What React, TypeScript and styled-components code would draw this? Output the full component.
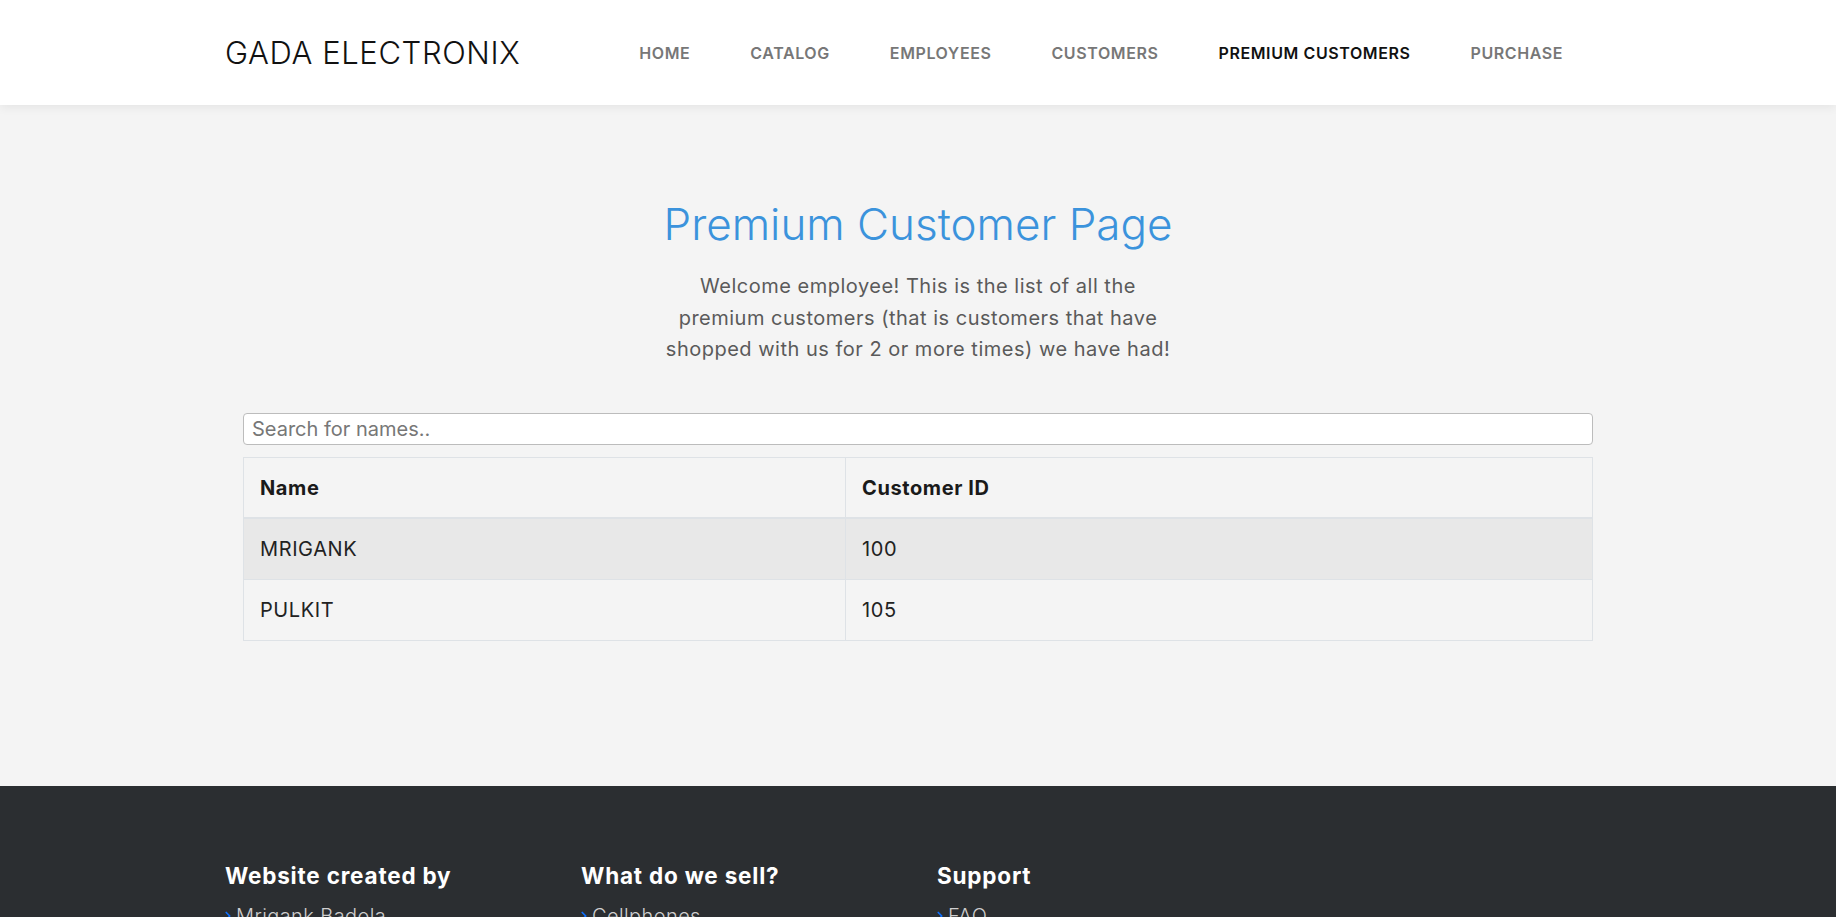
// @ts-nocheck
import React, { useState } from 'react';
import styled, { createGlobalStyle } from 'styled-components';
import { ChevronRight } from 'lucide-react';

const GlobalStyle = createGlobalStyle`
  html, body {
    margin: 0;
    padding: 0;
    background-color: #f4f4f4;
    font-family: Inter, "Open Sans", "Liberation Sans", sans-serif;
  }
  * {
    box-sizing: border-box;
  }
`;

const Page = styled.div`
  display: flex;
  flex-direction: column;
  min-height: 100vh;
`;

const Header = styled.header`
  height: 105px;
  background-color: #fff;
  box-shadow: 0 2px 10px rgba(0, 0, 0, 0.07);
  display: flex;
  align-items: center;
  padding: 0 225px;
  position: relative;
  z-index: 1;
`;

const Logo = styled.div`
  font-size: 31px;
  font-weight: 300;
  color: #111;
  letter-spacing: 0.6px;
`;

const Nav = styled.nav`
  display: flex;
  gap: 60px;
  margin-left: 119px;
`;

const NavLink = styled.a<{ active?: boolean }>`
  font-size: 16px;
  font-weight: 600;
  letter-spacing: 0.6px;
  text-transform: uppercase;
  color: ${props => props.active ? '#111' : '#777'};
  text-decoration: none;
  cursor: pointer;
`;

const Main = styled.main`
  display: flex;
  flex-direction: column;
  align-items: center;
  padding: 92px 0 145px;
`;

const Title = styled.h1`
  margin: 0;
  font-size: 44px;
  font-weight: 300;
  color: #3b93dc;
  line-height: 54px;
`;

const Intro = styled.p`
  margin: 20px 0 0;
  font-size: 20px;
  font-weight: 400;
  letter-spacing: 0.5px;
  line-height: 31.6px;
  color: #5a5a5a;
  text-align: center;
`;

const SearchInput = styled.input`
  width: 1350px;
  height: 32px;
  margin-top: 47px;
  padding: 0 8px;
  border: 1px solid #bcbcbc;
  border-radius: 4px;
  background: #fff;
  font-size: 20px;
  font-family: inherit;
  color: #333;

  &::placeholder {
    color: #777;
  }

  &:focus {
    outline: none;
    border-color: #3b93dc;
  }
`;

const Table = styled.table`
  width: 1350px;
  margin-top: 12px;
  border-collapse: collapse;
  border: 1px solid #dee2e6;
`;

const HeadCell = styled.th<{ width?: string }>`
  width: ${props => props.width || 'auto'};
  height: 61px;
  padding: 0 16px;
  text-align: left;
  font-size: 20px;
  font-weight: 700;
  letter-spacing: 0.6px;
  color: #1a1a1a;
  border: 1px solid #dee2e6;
  border-bottom: 2px solid #dee2e6;
`;

const Row = styled.tr<{ shaded?: boolean }>`
  background-color: ${props => props.shaded ? '#e8e8e8' : '#f4f4f4'};
`;

const Cell = styled.td`
  height: 61px;
  padding: 0 16px;
  font-size: 20px;
  font-weight: 400;
  letter-spacing: 0.6px;
  color: #222;
  border: 1px solid #dee2e6;
`;

const Footer = styled.footer`
  background-color: #2b2e31;
  padding: 76px 225px 60px;
  display: grid;
  grid-template-columns: repeat(4, 356px);
`;

const FooterColumn = styled.div`
  display: flex;
  flex-direction: column;
`;

const FooterHeading = styled.h4`
  margin: 0 0 14px;
  font-size: 22.5px;
  font-weight: 700;
  letter-spacing: 0.8px;
  color: #fff;
  line-height: 28px;
`;

const FooterList = styled.ul`
  list-style: none;
  margin: 0;
  padding: 0;
  display: flex;
  flex-direction: column;
  gap: 10px;
`;

const FooterItem = styled.li`
  display: flex;
  align-items: center;
  gap: 1px;
  margin-left: -4px;
  font-size: 20px;
  font-weight: 300;
  letter-spacing: 0.4px;
  color: #cfcfcf;
`;

const navItems = ['Home', 'Catalog', 'Employees', 'Customers', 'Premium Customers', 'Purchase'];

const customers = [
  { name: 'MRIGANK', id: 100 },
  { name: 'PULKIT', id: 105 },
];

const footerColumns = [
  { heading: 'Website created by', links: ['Mrigank Badola', 'Pulkit'] },
  { heading: 'What do we sell?', links: ['Cellphones', 'Laptops', 'Accessories'] },
  { heading: 'Support', links: ['FAQ', 'Contact us'] },
];

export default function App() {
  const [query, setQuery] = useState('');

  const rows = customers.filter(c => c.name.toLowerCase().includes(query.toLowerCase()));

  return (
    <Page>
      <GlobalStyle />
      <Header>
        <Logo>GADA ELECTRONIX</Logo>
        <Nav>
          {navItems.map(item => (
            <NavLink key={item} active={item === 'Premium Customers'}>{item}</NavLink>
          ))}
        </Nav>
      </Header>

      <Main>
        <Title>Premium Customer Page</Title>
        <Intro>
          Welcome employee! This is the list of all the<br />
          premium customers (that is customers that have<br />
          shopped with us for 2 or more times) we have had!
        </Intro>

        <SearchInput
          value={query}
          onChange={e => setQuery(e.target.value)}
          placeholder="Search for names.."
        />

        <Table>
          <thead>
            <tr>
              <HeadCell width="602px">Name</HeadCell>
              <HeadCell>Customer ID</HeadCell>
            </tr>
          </thead>
          <tbody>
            {rows.map((c, i) => (
              <Row key={c.id} shaded={i === 0}>
                <Cell>{c.name}</Cell>
                <Cell>{c.id}</Cell>
              </Row>
            ))}
          </tbody>
        </Table>
      </Main>

      <Footer>
        {footerColumns.map(col => (
          <FooterColumn key={col.heading}>
            <FooterHeading>{col.heading}</FooterHeading>
            <FooterList>
              {col.links.map(link => (
                <FooterItem key={link}>
                  <ChevronRight size={14} strokeWidth={3} color="#0d6efd" />
                  {link}
                </FooterItem>
              ))}
            </FooterList>
          </FooterColumn>
        ))}
      </Footer>
    </Page>
  );
}
